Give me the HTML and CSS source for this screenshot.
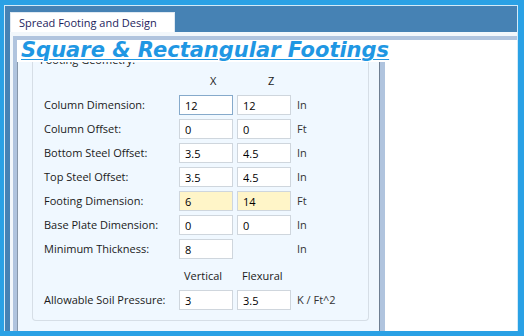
FILE: index.html
```html
<!DOCTYPE html>
<html lang="en">
<head>
    <meta charset="UTF-8">
    <meta name="viewport" content="width=device-width, initial-scale=1.0">
    <title>Spread Footing and Design</title>
    <link rel="stylesheet" href="styles.css">
</head>
<body>
    <div class="window">
        <div class="frame">
            <div class="tabstrip">
                <div class="tab">Spread Footing and Design</div>
            </div>

            <div class="tabpage">
                <div class="content">
                    <div class="left">
                        <h1 class="title">Square &amp; Rectangular Footings</h1>
                        <div class="panel">
                            <div class="scroll">
                                <div class="group">
                                    <div class="legend">Footing Geometry:</div>
                                    <div class="grid">
                                        <span></span>
                                        <span class="head hx">X</span>
                                        <span class="head hx">Z</span>
                                        <span></span>

                                        <label>Column Dimension:</label>
                                        <input type="text" class="focus" value="12">
                                        <input type="text" value="12">
                                        <span class="unit">In</span>

                                        <label>Column Offset:</label>
                                        <input type="text" value="0">
                                        <input type="text" value="0">
                                        <span class="unit">Ft</span>

                                        <label>Bottom Steel Offset:</label>
                                        <input type="text" value="3.5">
                                        <input type="text" value="4.5">
                                        <span class="unit">In</span>

                                        <label>Top Steel Offset:</label>
                                        <input type="text" value="3.5">
                                        <input type="text" value="4.5">
                                        <span class="unit">In</span>

                                        <label>Footing Dimension:</label>
                                        <input type="text" class="warn" value="6">
                                        <input type="text" class="warn" value="14">
                                        <span class="unit">Ft</span>

                                        <label>Base Plate Dimension:</label>
                                        <input type="text" value="0">
                                        <input type="text" value="0">
                                        <span class="unit">In</span>

                                        <label>Minimum Thickness:</label>
                                        <input type="text" value="8">
                                        <span></span>
                                        <span class="unit">In</span>

                                        <span></span>
                                        <span class="head hv">Vertical</span>
                                        <span class="head hv">Flexural</span>
                                        <span></span>

                                        <label>Allowable Soil Pressure:</label>
                                        <input type="text" value="3">
                                        <input type="text" value="3.5">
                                        <span class="unit">K / Ft^2</span>
                                    </div>
                                </div>
                            </div>
                            <div class="splitter"></div>
                        </div>
                    </div>
                    <div class="right"></div>
                </div>
            </div>
        </div>
    </div>
</body>
</html>
```

FILE: styles.css
```css
/* Marco general */
* {
    margin: 0;
    padding: 0;
    box-sizing: border-box;
}

body {
    background: #2aa1e5;
    font-family: 'Open Sans', 'Noto Sans', sans-serif;
    font-size: 11px;
    color: #1a1a1a;
}

.window {
    width: 524px;
    height: 336px;
    padding: 5px 6px 5px 4px;
}

.frame {
    height: 100%;
    background: #4682b4;
    border: 1px solid #d3eaf8;
    border-bottom: none;
    display: flex;
    flex-direction: column;
}

/* Pestaña */
.tabstrip {
    height: 26px;
    padding-left: 5px;
    display: flex;
    align-items: flex-end;
}

.tab {
    width: 165px;
    height: 20px;
    background: #fff;
    border: 1px solid #dfe9f2;
    border-bottom: none;
    padding-left: 8px;
    line-height: 20px;
    color: #1d1d5c;
}

.tabpage {
    flex: 1;
    margin-left: 5px;
    background: #f2f7fb;
    padding: 4px 0 0 3px;
    display: flex;
}

.content {
    flex: 1;
    display: flex;
    background: #fff;
    border-top: 4px solid #b0c4de;
    border-left: 4px solid #b0c4de;
}

.left {
    width: 368px;
    display: flex;
    flex-direction: column;
}

.right {
    flex: 1;
    background: #fff;
}

/* Titulo */
.title {
    height: 22px;
    background: #fff;
    padding-left: 4px;
    font-family: 'DejaVu Sans', sans-serif;
    font-size: 21px;
    font-weight: bold;
    font-style: italic;
    line-height: 20px;
    color: #1f97e3;
    text-decoration: underline;
    text-decoration-thickness: 1px;
    text-underline-offset: 2px;
    white-space: nowrap;
    position: relative;
    z-index: 1;
}

.panel {
    flex: 1;
    display: flex;
}

.scroll {
    flex: 1;
    background: #f0f8ff;
    border-left: 1px solid #8797aa;
    border-right: 1px solid #6f7f92;
    overflow: hidden;
    display: flex;
    flex-direction: column;
}

.splitter {
    width: 5px;
    background: #b0c4de;
}

/* Grupo de geometria */
.group {
    flex: 1;
    margin: -10px 10px 10px 14px;
    border: 1px solid #d6dee6;
    border-top: none;
    border-radius: 0 0 4px 4px;
    padding-left: 11px;
}

.legend {
    height: 16px;
    line-height: 16px;
    padding-left: 7px;
    margin-left: -11px;
}

.grid {
    margin-top: 3px;
    display: grid;
    grid-template-columns: 131px 54px 54px auto;
    grid-template-rows: repeat(8, 20px) 23px 20px;
    column-gap: 4px;
    row-gap: 4px;
}

.grid label,
.grid .head,
.grid .unit {
    line-height: 20px;
    white-space: nowrap;
}

.grid .unit {
    padding-left: 2px;
    color: #333;
}

.head.hx {
    padding-left: 31px;
}

.head.hv {
    padding-left: 5px;
    align-self: end;
}

.grid input {
    width: 54px;
    height: 20px;
    border: 1px solid #cfd6dd;
    background: #fff;
    padding-left: 5px;
    font-family: inherit;
    font-size: 11px;
    color: #000;
    outline: none;
}

.grid input.focus {
    border-color: #86aacb;
}

.grid input.warn {
    background: #fff5c8;
}
```
